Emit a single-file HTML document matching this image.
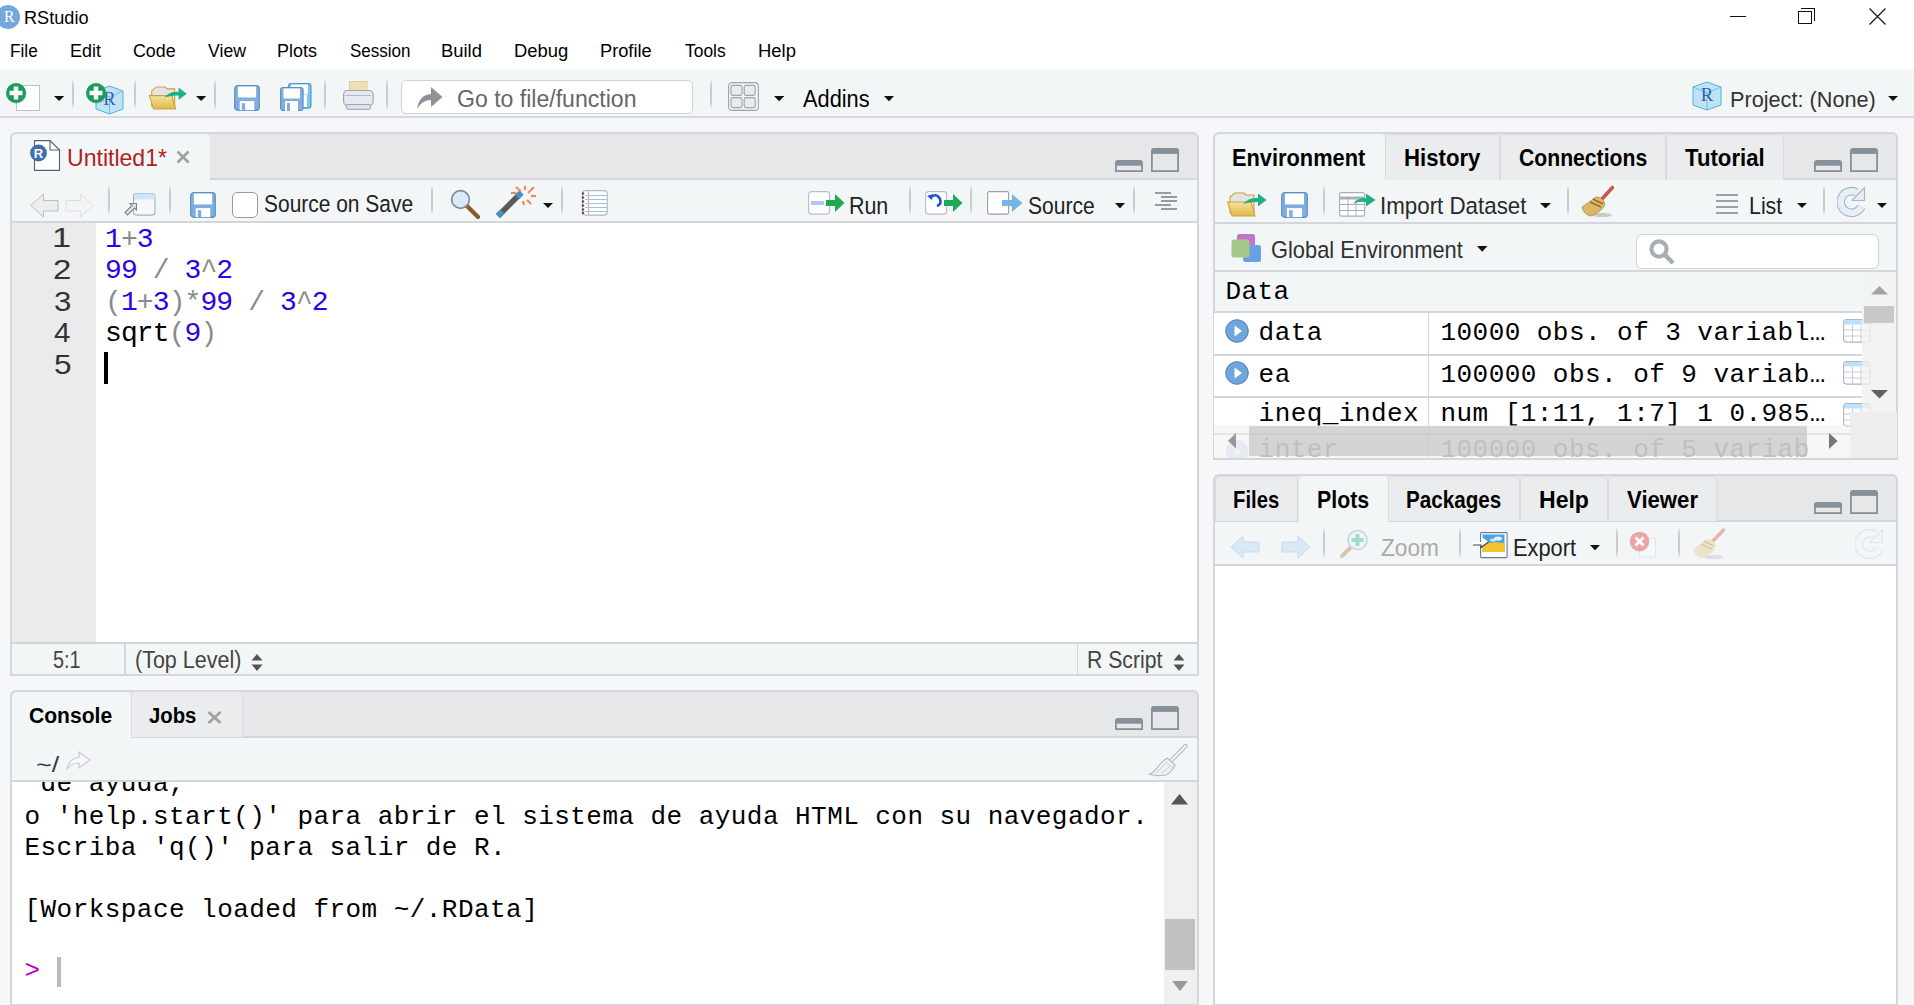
<!DOCTYPE html>
<html><head><meta charset="utf-8"><title>RStudio</title>
<style>
html,body{margin:0;padding:0;width:1914px;height:1005px;overflow:hidden;background:#f6f7f8;}
body{position:relative;font-family:"Liberation Sans", sans-serif;}
.t{position:absolute;white-space:pre;line-height:1;transform-origin:0 0;}
</style></head><body>
<div style="position:absolute;left:0px;top:0px;width:1914px;height:69px;background:#ffffff"></div>
<div style="position:absolute;left:-4px;top:5px;width:24px;height:24px;border-radius:50%;background:#75a7dc"></div>
<div style="position:absolute;left:1730px;top:16px;width:16px;height:1px;background:#111"></div>
<div style="position:absolute;left:1798px;top:11px;width:14px;height:13px;border:1px solid #111;box-sizing:border-box"></div>
<div style="position:absolute;left:1801px;top:8px;width:14px;height:13px;border-top:1px solid #111;border-right:1px solid #111;box-sizing:border-box"></div>
<svg style="position:absolute;left:1869px;top:8px;" width="17" height="17" viewBox="0 0 17 17"><path d="M0.5 0.5L16.5 16.5M16.5 0.5L0.5 16.5" stroke="#111" stroke-width="1.1"/></svg>
<div style="position:absolute;left:0px;top:69px;width:1914px;height:47px;background:#f3f6f7"></div>
<div style="position:absolute;left:0px;top:116px;width:1914px;height:2px;background:#d6d9dc"></div>
<div style="position:absolute;left:10px;top:132.3px;width:1189px;height:543.7px;background:#e6e7e9;border:2px solid #d3d7da;border-radius:6px 6px 0 0;box-sizing:border-box"></div>
<div style="position:absolute;left:11.7px;top:134px;width:198.3px;height:46px;background:#f3f6f7;border-radius:5px 5px 0 0"></div>
<div style="position:absolute;left:11.7px;top:178px;width:1185.6px;height:2px;background:#d3d7da"></div>
<div style="position:absolute;left:11.7px;top:180px;width:1185.6px;height:42px;background:#f3f6f7"></div>
<div style="position:absolute;left:11.7px;top:134px;width:198.3px;height:47px;background:#f3f6f7;border-radius:5px 5px 0 0"></div>
<div style="position:absolute;left:11.7px;top:221px;width:1185.6px;height:2px;background:#d3d7da"></div>
<div style="position:absolute;left:11.7px;top:223px;width:1185.6px;height:420px;background:#ffffff"></div>
<div style="position:absolute;left:11.7px;top:223px;width:84.3px;height:420px;background:#ebebeb"></div>
<div style="position:absolute;left:11.7px;top:642px;width:1185.6px;height:2px;background:#d3d7da"></div>
<div style="position:absolute;left:11.7px;top:644px;width:1185.6px;height:30.299999999999955px;background:#f3f6f7"></div>
<div style="position:absolute;left:124px;top:644px;width:1.5px;height:30.299999999999955px;background:#d3d7da"></div>
<div style="position:absolute;left:1076.5px;top:644px;width:1.5px;height:30.299999999999955px;background:#d3d7da"></div>
<div style="position:absolute;left:10px;top:690px;width:1189px;height:315px;background:#e6e7e9;border:2px solid #d3d7da;border-radius:6px 6px 0 0;box-sizing:border-box"></div>
<div style="position:absolute;left:11.7px;top:736px;width:1185.6px;height:2px;background:#d3d7da"></div>
<div style="position:absolute;left:131px;top:691px;width:112px;height:46px;background:#ebeced;border:1.5px solid #d9dcdf;border-bottom:none;border-radius:5px 5px 0 0;box-sizing:border-box"></div>
<div style="position:absolute;left:11.7px;top:691.7px;width:119.3px;height:46.299999999999955px;background:#f3f6f7;border-radius:5px 5px 0 0"></div>
<div style="position:absolute;left:11.7px;top:738px;width:1185.6px;height:42px;background:#f3f6f7"></div>
<div style="position:absolute;left:11.7px;top:780px;width:1185.6px;height:2px;background:#d3d7da"></div>
<div style="position:absolute;left:11.7px;top:782px;width:1185.6px;height:221.79999999999995px;background:#ffffff"></div>
<div style="position:absolute;left:1164px;top:782px;width:33.299999999999955px;height:221.79999999999995px;background:#f0f0f0"></div>
<div style="position:absolute;left:1165px;top:919px;width:30px;height:51px;background:#c1c1c1"></div>
<div style="position:absolute;left:1213px;top:132.3px;width:685px;height:327.7px;background:#e6e7e9;border:2px solid #d3d7da;border-radius:6px 6px 0 0;box-sizing:border-box"></div>
<div style="position:absolute;left:1215px;top:178px;width:681.3px;height:2px;background:#d3d7da"></div>
<div style="position:absolute;left:1385px;top:133.5px;width:115px;height:46.5px;background:#ebeced;border:1.5px solid #d9dcdf;border-bottom:none;border-radius:5px 5px 0 0;box-sizing:border-box"></div>
<div style="position:absolute;left:1500px;top:133.5px;width:166px;height:46.5px;background:#ebeced;border:1.5px solid #d9dcdf;border-bottom:none;border-radius:5px 5px 0 0;box-sizing:border-box"></div>
<div style="position:absolute;left:1666px;top:133.5px;width:118px;height:46.5px;background:#ebeced;border:1.5px solid #d9dcdf;border-bottom:none;border-radius:5px 5px 0 0;box-sizing:border-box"></div>
<div style="position:absolute;left:1214.7px;top:134px;width:170.29999999999995px;height:47px;background:#f3f6f7;border-radius:5px 5px 0 0"></div>
<div style="position:absolute;left:1214.7px;top:180px;width:681.5999999999999px;height:42px;background:#f3f6f7"></div>
<div style="position:absolute;left:1214.7px;top:222px;width:681.5999999999999px;height:2px;background:#d3d7da"></div>
<div style="position:absolute;left:1214.7px;top:224px;width:681.5999999999999px;height:46px;background:#f3f6f7"></div>
<div style="position:absolute;left:1214.7px;top:270px;width:681.5999999999999px;height:2px;background:#d3d7da"></div>
<div style="position:absolute;left:1214.7px;top:272px;width:681.5999999999999px;height:186px;background:#f3f6f7"></div>
<div style="position:absolute;left:1213px;top:474px;width:685px;height:531px;background:#e6e7e9;border:2px solid #d3d7da;border-radius:6px 6px 0 0;box-sizing:border-box"></div>
<div style="position:absolute;left:1215px;top:520px;width:681.3px;height:2px;background:#d3d7da"></div>
<div style="position:absolute;left:1214.7px;top:475.5px;width:83.79999999999995px;height:45.5px;background:#ebeced;border:1.5px solid #d9dcdf;border-bottom:none;border-radius:5px 5px 0 0;box-sizing:border-box"></div>
<div style="position:absolute;left:1387.5px;top:475.5px;width:132.5px;height:45.5px;background:#ebeced;border:1.5px solid #d9dcdf;border-bottom:none;border-radius:5px 5px 0 0;box-sizing:border-box"></div>
<div style="position:absolute;left:1520px;top:475.5px;width:87.5px;height:45.5px;background:#ebeced;border:1.5px solid #d9dcdf;border-bottom:none;border-radius:5px 5px 0 0;box-sizing:border-box"></div>
<div style="position:absolute;left:1607.5px;top:475.5px;width:109.5px;height:45.5px;background:#ebeced;border:1.5px solid #d9dcdf;border-bottom:none;border-radius:5px 5px 0 0;box-sizing:border-box"></div>
<div style="position:absolute;left:1298.5px;top:476px;width:89.0px;height:46px;background:#f3f6f7;border-radius:5px 5px 0 0"></div>
<div style="position:absolute;left:1214.7px;top:522px;width:681.5999999999999px;height:42px;background:#f3f6f7"></div>
<div style="position:absolute;left:1214.7px;top:564px;width:681.5999999999999px;height:2px;background:#d3d7da"></div>
<div style="position:absolute;left:1214.7px;top:566px;width:681.5999999999999px;height:437.79999999999995px;background:#ffffff"></div>
<div style="position:absolute;left:104px;top:352px;width:4px;height:32px;background:#000"></div>
<div style="position:absolute;left:57px;top:957px;width:4px;height:30px;background:#bbb"></div>
<svg style="position:absolute;left:16px;top:85px;" width="24" height="26" viewBox="0 0 24 26"><rect x="0.5" y="0.5" width="23" height="25" fill="#fff" stroke="#b9c3cf" stroke-width="1"/></svg>
<svg style="position:absolute;left:4.699999999999999px;top:81.6px;" width="23" height="23" viewBox="0 0 23 23"><circle cx="11.6" cy="11.6" r="10" fill="#6b7d6b" opacity="0.35"/><circle cx="11" cy="11" r="10" fill="#1a9d5c"/><path d="M8.8 4.5h4.4v4.3h4.3v4.4h-4.3v4.3h-4.4v-4.3h-4.3v-4.4h4.3z" fill="#fff"/></svg>
<svg style="position:absolute;left:54px;top:96px;" width="10.299999999999997" height="5" viewBox="0 0 10.299999999999997 5"><path d="M0 0H10.299999999999997L5.149999999999999 5Z" fill="#111"/></svg>
<div style="position:absolute;left:72px;top:79px;width:2px;height:30px;background:linear-gradient(to bottom,rgba(200,204,208,0),#c9cdd0 20%,#c9cdd0 80%,rgba(200,204,208,0))"></div>
<svg style="position:absolute;left:95px;top:85px;" width="29" height="30" viewBox="0 0 29 30"><path d="M14.5 1 L28 6.0 V24.0 L14.5 29 L1 24.0 V6.0Z" fill="#bfe3f5" stroke="#4fb3d9" stroke-width="1"/><path d="M1 6.0 L14.5 12.0 L28 6.0 M14.5 12.0 V29" fill="none" stroke="#4fb3d9" stroke-width="0.9" opacity="0.8"/><text x="14.5" y="20.400000000000002" text-anchor="middle" font-family="Liberation Serif" font-size="18.6" fill="#2f62b0">R</text></svg>
<svg style="position:absolute;left:84.6px;top:81.6px;" width="23" height="23" viewBox="0 0 23 23"><circle cx="11.6" cy="11.6" r="10" fill="#6b7d6b" opacity="0.35"/><circle cx="11" cy="11" r="10" fill="#1a9d5c"/><path d="M8.8 4.5h4.4v4.3h4.3v4.4h-4.3v4.3h-4.4v-4.3h-4.3v-4.4h4.3z" fill="#fff"/></svg>
<div style="position:absolute;left:134px;top:79px;width:2px;height:30px;background:linear-gradient(to bottom,rgba(200,204,208,0),#c9cdd0 20%,#c9cdd0 80%,rgba(200,204,208,0))"></div>
<svg style="position:absolute;left:148px;top:86px;" width="40" height="24" viewBox="0 0 40 25"><path d="M3 5 L8 1 H17 L19 3 H27 V21 H3Z" fill="#e4e4e4" stroke="#c9a33a" stroke-width="1.1"/><path d="M0.6 10 H24 L28 24 H5Z" fill="url(#fg)" stroke="#c9a33a" stroke-width="1.1"/><defs><linearGradient id="fg" x1="0" y1="0" x2="0" y2="1"><stop offset="0" stop-color="#f7e39a"/><stop offset="1" stop-color="#e0b84a"/></linearGradient></defs><path d="M16 12 Q22 5 31 6 V1.5 L39.5 8 L31 14.5 V10 Q24 9.5 16 12Z" fill="#21b083"/></svg>
<svg style="position:absolute;left:196px;top:96px;" width="10.300000000000011" height="5" viewBox="0 0 10.300000000000011 5"><path d="M0 0H10.300000000000011L5.150000000000006 5Z" fill="#111"/></svg>
<div style="position:absolute;left:214px;top:79px;width:2px;height:31px;background:linear-gradient(to bottom,rgba(200,204,208,0),#c9cdd0 20%,#c9cdd0 80%,rgba(200,204,208,0))"></div>
<svg style="position:absolute;left:234px;top:85px;" width="26" height="26" viewBox="0 0 26 26"><rect x="0.7" y="0.7" width="24.6" height="24.6" rx="3" fill="#7eaee0" stroke="#5b8fc7" stroke-width="1.2"/><rect x="3.9" y="1.5" width="18.2" height="10.92" fill="#fff"/><rect x="5.72" y="16.12" width="14.560000000000002" height="9.08" fill="#fff"/><rect x="7.8" y="18.2" width="3.38" height="7.0" fill="#7eaee0"/></svg>
<svg style="position:absolute;left:280px;top:83px;" width="32" height="28" viewBox="0 0 32 28"><rect x="8.5" y="0.6" width="22.5" height="24.5" rx="2.5" fill="#74c9ea" stroke="#5b8fc7" stroke-width="1.1"/><rect x="11" y="1.5" width="17" height="10" fill="#fff"/><rect x="22" y="12" width="5" height="12" fill="#fff"/><rect x="0.6" y="4.5" width="22.5" height="23" rx="2.5" fill="#7eaee0" stroke="#5b8fc7" stroke-width="1.1"/><rect x="3.5" y="5.5" width="16.5" height="10" fill="#fff"/><rect x="5" y="18" width="13" height="10" fill="#fff"/><rect x="7" y="20" width="3" height="8" fill="#7eaee0"/></svg>
<div style="position:absolute;left:324px;top:79px;width:2px;height:31px;background:linear-gradient(to bottom,rgba(200,204,208,0),#c9cdd0 20%,#c9cdd0 80%,rgba(200,204,208,0))"></div>
<svg style="position:absolute;left:343px;top:81px;" width="31" height="29" viewBox="0 0 31 29"><rect x="6.5" y="0.5" width="17.5" height="14" fill="#efe0b4" stroke="#e2cf98"/><rect x="0.6" y="9.5" width="29.5" height="15" rx="4" fill="#e6e9ef" stroke="#9aa3b0" stroke-width="1.1"/><rect x="3.5" y="23.5" width="24" height="4.8" rx="1.5" fill="#dfe3ea" stroke="#9aa3b0"/><line x1="2" y1="14.5" x2="28" y2="14.5" stroke="#b5bcc6"/></svg>
<div style="position:absolute;left:386px;top:79px;width:2px;height:31px;background:linear-gradient(to bottom,rgba(200,204,208,0),#c9cdd0 20%,#c9cdd0 80%,rgba(200,204,208,0))"></div>
<div style="position:absolute;left:401px;top:80px;width:292px;height:34px;background:#fff;border:1.5px solid #cfd3d6;border-radius:5px;box-sizing:border-box"></div>
<svg style="position:absolute;left:416px;top:86px;" width="27" height="24" viewBox="0 0 27 24"><path d="M1 23 Q3 9 15 8 V1 L26.5 11 L15 21 V14 Q6 14 1 23Z" fill="#8b9299"/></svg>
<div style="position:absolute;left:710px;top:79px;width:2px;height:30px;background:linear-gradient(to bottom,rgba(200,204,208,0),#c9cdd0 20%,#c9cdd0 80%,rgba(200,204,208,0))"></div>
<svg style="position:absolute;left:728px;top:82px;" width="31" height="29" viewBox="0 0 31 29"><rect x="0.6" y="0.6" width="29.8" height="27.8" rx="3.5" fill="#f2f4f5" stroke="#9ba3ab" stroke-width="1.1"/><rect x="3" y="3.4" width="11" height="10" rx="1.8" fill="#e8eaee" stroke="#9ba3ab" stroke-width="1.1"/><rect x="16.2" y="3.4" width="11" height="10" rx="1.8" fill="#e8eaee" stroke="#9ba3ab" stroke-width="1.1"/><rect x="3" y="15.6" width="11" height="10" rx="1.8" fill="#e8eaee" stroke="#9ba3ab" stroke-width="1.1"/><rect x="16.2" y="15.6" width="11" height="10" rx="1.8" fill="#e8eaee" stroke="#9ba3ab" stroke-width="1.1"/></svg>
<svg style="position:absolute;left:774px;top:96px;" width="10.299999999999955" height="5.299999999999997" viewBox="0 0 10.299999999999955 5.299999999999997"><path d="M0 0H10.299999999999955L5.149999999999977 5.299999999999997Z" fill="#111"/></svg>
<svg style="position:absolute;left:884px;top:96px;" width="10" height="5.299999999999997" viewBox="0 0 10 5.299999999999997"><path d="M0 0H10L5.0 5.299999999999997Z" fill="#111"/></svg>
<svg style="position:absolute;left:1692px;top:81px;" width="30" height="30" viewBox="0 0 30 30"><path d="M15.0 1 L29 6.0 V24.0 L15.0 29 L1 24.0 V6.0Z" fill="#bfe3f5" stroke="#4fb3d9" stroke-width="1"/><path d="M1 6.0 L15.0 12.0 L29 6.0 M15.0 12.0 V29" fill="none" stroke="#4fb3d9" stroke-width="0.9" opacity="0.8"/><text x="15.0" y="20.400000000000002" text-anchor="middle" font-family="Liberation Serif" font-size="18.6" fill="#2f62b0">R</text></svg>
<svg style="position:absolute;left:1888px;top:96px;" width="10" height="5" viewBox="0 0 10 5"><path d="M0 0H10L5.0 5Z" fill="#111"/></svg>
<svg style="position:absolute;left:30px;top:140px;" width="31" height="31" viewBox="0 0 31 31"><path d="M4.5 0.6H20L29.5 10V30.4H4.5Z" fill="#fff" stroke="#5a6068" stroke-width="1.1"/><path d="M20 0.6V10H29.5" fill="none" stroke="#5a6068" stroke-width="1.1"/><circle cx="8.5" cy="13" r="8.4" fill="#3f6ea8"/><text x="8.5" y="17.8" text-anchor="middle" font-family="Liberation Sans" font-weight="bold" font-size="13" fill="#fff">R</text></svg>
<svg style="position:absolute;left:176px;top:150px;" width="14" height="14" viewBox="0 0 14 14"><path d="M1.5 1.5L12.5 12.5M12.5 1.5L1.5 12.5" stroke="#a0a0a0" stroke-width="2.6"/></svg>
<svg style="position:absolute;left:1115px;top:160px;" width="28" height="12" viewBox="0 0 28 12"><path d="M0 12V3Q0 0 3 0H25Q28 0 28 3V12Z" fill="#86909a"/><rect x="1.8" y="5.7" width="24.4" height="4.5" fill="#e6e7e9"/></svg>
<svg style="position:absolute;left:1151px;top:148px;" width="28" height="24" viewBox="0 0 28 24"><path d="M0 24V3Q0 0 3 0H25Q28 0 28 3V24Z" fill="#86909a"/><rect x="1.8" y="5.9" width="24.4" height="16.3" fill="#e6e7e9"/></svg>
<svg style="position:absolute;left:30px;top:193px;" width="29" height="25" viewBox="0 0 29 25"><path d="M0.8 12.5 L13.5 1 V7.5 H28 V18 H13.5 V24 Z" fill="#ededee" stroke="#b9bcc0" stroke-width="1"/></svg>
<svg style="position:absolute;left:65px;top:193px;" width="29" height="25" viewBox="0 0 29 25"><path d="M28.2 12.5 L15.5 1 V7.5 H1 V18 H15.5 V24 Z" fill="#f3f4f5" stroke="#dcdee0" stroke-width="1"/></svg>
<div style="position:absolute;left:108px;top:185px;width:2px;height:30px;background:linear-gradient(to bottom,rgba(200,204,208,0),#c9cdd0 20%,#c9cdd0 80%,rgba(200,204,208,0))"></div>
<svg style="position:absolute;left:124px;top:193px;" width="32" height="23" viewBox="0 0 32 23"><rect x="9.5" y="0.6" width="21.5" height="21.5" rx="3" fill="#f6f8fa" stroke="#a9b1b9" stroke-width="1.1"/><path d="M10 3.5 Q10 0.6 13 0.6 H28 Q31 0.6 31 3.5 V6.5 H10Z" fill="#cfe6f8"/><path d="M1 19.5 L8 12.5 L6 10.5 H12.5 V17 L10.5 15 L3.5 22Z" fill="#dfe3e8" stroke="#7e8790" stroke-width="1.1"/></svg>
<div style="position:absolute;left:169px;top:185px;width:2px;height:30px;background:linear-gradient(to bottom,rgba(200,204,208,0),#c9cdd0 20%,#c9cdd0 80%,rgba(200,204,208,0))"></div>
<svg style="position:absolute;left:190px;top:192px;" width="26" height="26" viewBox="0 0 26 26"><rect x="0.7" y="0.7" width="24.6" height="24.6" rx="3" fill="#7eaee0" stroke="#5b8fc7" stroke-width="1.2"/><rect x="3.9" y="1.5" width="18.2" height="10.92" fill="#fff"/><rect x="5.72" y="16.12" width="14.560000000000002" height="9.08" fill="#fff"/><rect x="7.8" y="18.2" width="3.38" height="7.0" fill="#7eaee0"/></svg>
<div style="position:absolute;left:232px;top:192px;width:26px;height:26px;background:#fff;border:1.8px solid #9b9b9b;border-radius:5px;box-sizing:border-box"></div>
<div style="position:absolute;left:431px;top:185px;width:2px;height:30px;background:linear-gradient(to bottom,rgba(200,204,208,0),#c9cdd0 20%,#c9cdd0 80%,rgba(200,204,208,0))"></div>
<svg style="position:absolute;left:450px;top:189px;" width="30" height="30" viewBox="0 0 30 30"><line x1="16" y1="16" x2="28" y2="28" stroke="#8a5a2b" stroke-width="4.2" stroke-linecap="round"/><line x1="15" y1="15" x2="17" y2="17" stroke="#5bbbe8" stroke-width="4"/><circle cx="10.5" cy="10.5" r="8.8" fill="#dbeafb" stroke="#7e8a96" stroke-width="1.7"/></svg>
<svg style="position:absolute;left:496px;top:185px;" width="40" height="33" viewBox="0 0 40 33"><path d="M2 31 L25 8" stroke="#5a5a5a" stroke-width="5.8" stroke-linecap="butt"/><path d="M2 31 L6.5 26.5" stroke="#4a8fc2" stroke-width="6"/><path d="M21 12 L25.5 7.5" stroke="#4a8fc2" stroke-width="6"/><g stroke="#f08a5a" stroke-width="2.2"><path d="M20 2 L25 6.5"/><path d="M29 1 V5"/><path d="M38 2 L32 8"/><path d="M35 11 H40"/><path d="M31 15 L35 19"/><path d="M27 16 L28 20"/><path d="M15 8 H20"/></g></svg>
<svg style="position:absolute;left:543px;top:203px;" width="10" height="5" viewBox="0 0 10 5"><path d="M0 0H10L5.0 5Z" fill="#111"/></svg>
<div style="position:absolute;left:561px;top:185px;width:2px;height:30px;background:linear-gradient(to bottom,rgba(200,204,208,0),#c9cdd0 20%,#c9cdd0 80%,rgba(200,204,208,0))"></div>
<svg style="position:absolute;left:580px;top:190px;" width="28" height="26" viewBox="0 0 28 26"><rect x="2.5" y="0.6" width="24.8" height="24.5" rx="3" fill="#fff" stroke="#b4b8bd" stroke-width="1.1"/><g stroke="#9cc0e8" stroke-width="1"><path d="M5 5.5H27M5 9.5H27M5 13.5H27M5 17.5H27M5 21.5H27"/></g><path d="M8.5 1V25" stroke="#f0a0a0" stroke-width="1"/><g fill="#555"><circle cx="3" cy="3.5" r="1.3"/><circle cx="3" cy="7.5" r="1.3"/><circle cx="3" cy="11.5" r="1.3"/><circle cx="3" cy="15.5" r="1.3"/><circle cx="3" cy="19.5" r="1.3"/><circle cx="3" cy="23" r="1.3"/></g></svg>
<svg style="position:absolute;left:808px;top:191px;" width="37" height="24" viewBox="0 0 37 24"><rect x="0.6" y="0.6" width="21" height="22.5" rx="3" fill="#fff" stroke="#b9bec4" stroke-width="1.1"/><rect x="3" y="10" width="13" height="4" fill="#a9c8ef"/><path d="M18 9 H27 V3 L36.5 12 L27 21 V15 H18Z" fill="#1daa55"/></svg>
<div style="position:absolute;left:909px;top:185px;width:2px;height:30px;background:linear-gradient(to bottom,rgba(200,204,208,0),#c9cdd0 20%,#c9cdd0 80%,rgba(200,204,208,0))"></div>
<svg style="position:absolute;left:925px;top:191px;" width="38" height="24" viewBox="0 0 38 24"><rect x="0.6" y="0.6" width="21" height="22.5" rx="3" fill="#fff" stroke="#b9bec4" stroke-width="1.1"/><path d="M5 7 Q11 1 15 8 Q17 13 12 15" fill="none" stroke="#1a56d6" stroke-width="2.6"/><path d="M2 5 L8 3 L7 9Z" fill="#1a56d6"/><path d="M19 9 H28 V3 L37.5 12 L28 21 V15 H19Z" fill="#1daa55"/></svg>
<div style="position:absolute;left:970px;top:185px;width:2px;height:30px;background:linear-gradient(to bottom,rgba(200,204,208,0),#c9cdd0 20%,#c9cdd0 80%,rgba(200,204,208,0))"></div>
<svg style="position:absolute;left:987px;top:191px;" width="36" height="24" viewBox="0 0 36 24"><rect x="0.6" y="0.6" width="21" height="22.5" rx="1.5" fill="#fff" stroke="#9aa0a6" stroke-width="1.1"/><path d="M15 9 H25 V3 L35.5 12 L25 21 V15 H15Z" fill="#78b3e6"/></svg>
<svg style="position:absolute;left:1115px;top:202.6px;" width="10" height="5.400000000000006" viewBox="0 0 10 5.400000000000006"><path d="M0 0H10L5.0 5.400000000000006Z" fill="#111"/></svg>
<div style="position:absolute;left:1133px;top:185px;width:2px;height:30px;background:linear-gradient(to bottom,rgba(200,204,208,0),#c9cdd0 20%,#c9cdd0 80%,rgba(200,204,208,0))"></div>
<svg style="position:absolute;left:1155px;top:192px;" width="23" height="19" viewBox="0 0 23 19"><g stroke="#939ba4" stroke-width="1.9"><path d="M0 1H16M6 5H22M6 9H22M0 13H16M6 17H22"/></g></svg>
<svg style="position:absolute;left:251px;top:654px;" width="12" height="17" viewBox="0 0 12 17"><path d="M6 0L11.5 6.5H0.5Z M6 17L11.5 10.5H0.5Z" fill="#555"/></svg>
<svg style="position:absolute;left:1173px;top:654px;" width="12" height="17" viewBox="0 0 12 17"><path d="M6 0L11.5 6.5H0.5Z M6 17L11.5 10.5H0.5Z" fill="#555"/></svg>
<svg style="position:absolute;left:207px;top:711px;" width="15" height="13" viewBox="0 0 15 13"><path d="M1.5 1L13.5 12M13.5 1L1.5 12" stroke="#a0a0a0" stroke-width="2.6"/></svg>
<svg style="position:absolute;left:1115px;top:718px;" width="28" height="12" viewBox="0 0 28 12"><path d="M0 12V3Q0 0 3 0H25Q28 0 28 3V12Z" fill="#86909a"/><rect x="1.8" y="5.7" width="24.4" height="4.5" fill="#e6e7e9"/></svg>
<svg style="position:absolute;left:1151px;top:706px;" width="28" height="24" viewBox="0 0 28 24"><path d="M0 24V3Q0 0 3 0H25Q28 0 28 3V24Z" fill="#86909a"/><rect x="1.8" y="5.9" width="24.4" height="16.3" fill="#e6e7e9"/></svg>
<svg style="position:absolute;left:66px;top:751px;" width="25" height="19" viewBox="0 0 25 19"><path d="M1 18 Q3 7 13 6.5 V1 L24 9 L13 17 V12 Q6 12 1 18Z" fill="#f7f8fa" stroke="#c7ccd1" stroke-width="1.1"/></svg>
<svg style="position:absolute;left:1148px;top:744px;" width="40" height="33" viewBox="0 0 40 33"><path d="M37.5 2 L23 17" stroke="#b3bac1" stroke-width="4.2" stroke-linecap="round"/><path d="M37.5 2 L23 17" stroke="#f4f6f8" stroke-width="2" stroke-linecap="round"/><path d="M19 14 L27 21 Q24 28 18 31 Q10 32.5 1.5 30.5 Q6 28 9 24 Q14 17 19 14Z" fill="#eef1f4" stroke="#b3bac1" stroke-width="1.1"/><path d="M8 29 L18 19 M13 30 L22 22 M17 17 L25 24" stroke="#c3c9cf" stroke-width="0.9"/></svg>
<svg style="position:absolute;left:1171px;top:794px;" width="17" height="11" viewBox="0 0 17 11"><path d="M8.5 0L17 10.5H0Z" fill="#555"/></svg>
<svg style="position:absolute;left:1172px;top:981px;" width="16" height="10" viewBox="0 0 16 10"><path d="M8 10L16 0H0Z" fill="#999"/></svg>
<svg style="position:absolute;left:1814px;top:160px;" width="28" height="12" viewBox="0 0 28 12"><path d="M0 12V3Q0 0 3 0H25Q28 0 28 3V12Z" fill="#86909a"/><rect x="1.8" y="5.7" width="24.4" height="4.5" fill="#e6e7e9"/></svg>
<svg style="position:absolute;left:1850px;top:148px;" width="28" height="24" viewBox="0 0 28 24"><path d="M0 24V3Q0 0 3 0H25Q28 0 28 3V24Z" fill="#86909a"/><rect x="1.8" y="5.9" width="24.4" height="16.3" fill="#e6e7e9"/></svg>
<svg style="position:absolute;left:1227px;top:192px;" width="40" height="25" viewBox="0 0 40 25"><path d="M3 5 L8 1 H17 L19 3 H27 V21 H3Z" fill="#e4e4e4" stroke="#c9a33a" stroke-width="1.1"/><path d="M0.6 10 H24 L28 24 H5Z" fill="url(#fg)" stroke="#c9a33a" stroke-width="1.1"/><defs><linearGradient id="fg" x1="0" y1="0" x2="0" y2="1"><stop offset="0" stop-color="#f7e39a"/><stop offset="1" stop-color="#e0b84a"/></linearGradient></defs><path d="M16 12 Q22 5 31 6 V1.5 L39.5 8 L31 14.5 V10 Q24 9.5 16 12Z" fill="#21b083"/></svg>
<svg style="position:absolute;left:1281px;top:192px;" width="27" height="26" viewBox="0 0 27 26"><rect x="0.7" y="0.7" width="25.6" height="24.6" rx="3" fill="#7eaee0" stroke="#5b8fc7" stroke-width="1.2"/><rect x="4.05" y="1.5" width="18.9" height="10.92" fill="#fff"/><rect x="5.94" y="16.12" width="15.120000000000001" height="9.08" fill="#fff"/><rect x="8.1" y="18.2" width="3.5100000000000002" height="7.0" fill="#7eaee0"/></svg>
<div style="position:absolute;left:1323px;top:185px;width:2px;height:31px;background:linear-gradient(to bottom,rgba(200,204,208,0),#c9cdd0 20%,#c9cdd0 80%,rgba(200,204,208,0))"></div>
<svg style="position:absolute;left:1339px;top:192px;" width="37" height="25" viewBox="0 0 37 25"><rect x="0.6" y="0.6" width="25" height="23.5" rx="2" fill="#fff" stroke="#a7b0ba" stroke-width="1.1"/><path d="M1 6H25" stroke="#a7b0ba" stroke-width="3"/><g stroke="#a7b0ba" stroke-width="1"><path d="M1 12.5H25M1 18.5H25M9 6V24M17 6V24"/></g><path d="M14 12 Q19 5 27 6 V1.5 L36.5 8 L27 14.5 V10 Q20 9 14 12Z" fill="#21b083"/></svg>
<svg style="position:absolute;left:1540px;top:203px;" width="11" height="5.400000000000006" viewBox="0 0 11 5.400000000000006"><path d="M0 0H11L5.5 5.400000000000006Z" fill="#111"/></svg>
<div style="position:absolute;left:1567px;top:185px;width:2px;height:31px;background:linear-gradient(to bottom,rgba(200,204,208,0),#c9cdd0 20%,#c9cdd0 80%,rgba(200,204,208,0))"></div>
<svg style="position:absolute;left:1581px;top:185px;" width="33" height="33" viewBox="0 0 33 33"><ellipse cx="21" cy="30" rx="10" ry="2" fill="#777" opacity="0.35"/><path d="M31.5 2.5 L20 15" stroke="#c9574e" stroke-width="3.6" stroke-linecap="round"/><path d="M15 12 Q22 12 24 19 Q22 26 10 31 Q3 30 1 22 Q7 18 15 12Z" fill="#d9b86a" stroke="#b08a3a" stroke-width="0.8"/><path d="M9 17 L20 22 M12 14 L22 19" stroke="#9a6a2a" stroke-width="1.4"/></svg>
<svg style="position:absolute;left:1716px;top:194px;" width="23" height="20" viewBox="0 0 23 20"><g stroke="#9aa1a8" stroke-width="2"><path d="M0 1H22M0 7H22M0 13H22M0 19H22"/></g></svg>
<svg style="position:absolute;left:1797px;top:203px;" width="10" height="5" viewBox="0 0 10 5"><path d="M0 0H10L5.0 5Z" fill="#111"/></svg>
<div style="position:absolute;left:1823px;top:185px;width:2px;height:31px;background:linear-gradient(to bottom,rgba(200,204,208,0),#c9cdd0 20%,#c9cdd0 80%,rgba(200,204,208,0))"></div>
<svg style="position:absolute;left:1837px;top:186px;" width="30" height="31" viewBox="0 0 30 31"><g opacity="1"><path d="M24.29 20.56 A10.8 10.8 0 1 1 19.57 6.46" fill="none" stroke="#aab6c2" stroke-width="8.6"/><path d="M24.29 20.56 A10.8 10.8 0 1 1 19.57 6.46" fill="none" stroke="#e6eef8" stroke-width="6.4"/><path d="M27.5 1.5 V14.5 H15Z" fill="#e6eef8" stroke="#aab6c2" stroke-width="1.1" stroke-linejoin="round"/></g></svg>
<svg style="position:absolute;left:1877px;top:203px;" width="10" height="5" viewBox="0 0 10 5"><path d="M0 0H10L5.0 5Z" fill="#111"/></svg>
<svg style="position:absolute;left:1231px;top:233px;" width="31" height="30" viewBox="0 0 31 30"><rect x="6" y="1" width="18" height="17" rx="2.5" fill="#c174c9"/><rect x="12" y="12" width="18" height="17" rx="2.5" fill="#6aa0e8"/><rect x="0.5" y="6.5" width="18" height="18" rx="2.5" fill="#a7c78a"/></svg>
<svg style="position:absolute;left:1477px;top:246.4px;" width="10.400000000000091" height="5.799999999999983" viewBox="0 0 10.400000000000091 5.799999999999983"><path d="M0 0H10.400000000000091L5.2000000000000455 5.799999999999983Z" fill="#111"/></svg>
<div style="position:absolute;left:1636px;top:234px;width:243px;height:35px;background:#fff;border:1.5px solid #cfd3d6;border-radius:6px;box-sizing:border-box"></div>
<svg style="position:absolute;left:1649px;top:239px;" width="27" height="26" viewBox="0 0 27 26"><circle cx="10" cy="10" r="7.6" fill="none" stroke="#a7aeb4" stroke-width="4.2"/><path d="M15.5 15.5 L24 24" stroke="#a7aeb4" stroke-width="4.5"/></svg>
<div style="position:absolute;left:1214.7px;top:272px;width:681.5999999999999px;height:40px;background:#f3f6f7"></div>
<div style="position:absolute;left:1214px;top:311px;width:648px;height:2px;background:#d3d7da"></div>
<div style="position:absolute;left:1214px;top:313px;width:648px;height:41px;background:#fff"></div>
<div style="position:absolute;left:1214px;top:355px;width:648px;height:41px;background:#fff"></div>
<div style="position:absolute;left:1214px;top:397px;width:648px;height:36px;background:#fff"></div>
<div style="position:absolute;left:1214px;top:434px;width:648px;height:24px;background:#fff"></div>
<div style="position:absolute;left:1214px;top:354px;width:648px;height:1.5px;background:#d3d7da"></div>
<div style="position:absolute;left:1214px;top:396px;width:648px;height:1.5px;background:#d3d7da"></div>
<div style="position:absolute;left:1214px;top:433px;width:648px;height:1.5px;background:#d3d7da"></div>
<div style="position:absolute;left:1427.5px;top:313px;width:1.5px;height:145px;background:#d3d7da"></div>
<svg style="position:absolute;left:1225px;top:319px;" width="24" height="24" viewBox="0 0 24 24"><g opacity="1"><circle cx="12" cy="12" r="11.3" fill="#6fa6dc" stroke="#4a84c2" stroke-width="1"/><path d="M9.5 6.5 L17 12 L9.5 17.5Z" fill="#fff"/></g></svg>
<svg style="position:absolute;left:1225px;top:361px;" width="24" height="24" viewBox="0 0 24 24"><g opacity="1"><circle cx="12" cy="12" r="11.3" fill="#6fa6dc" stroke="#4a84c2" stroke-width="1"/><path d="M9.5 6.5 L17 12 L9.5 17.5Z" fill="#fff"/></g></svg>
<svg style="position:absolute;left:1214px;top:434px;" width="60" height="24" viewBox="0 0 60 24"><circle cx="23" cy="17.4" r="11.3" fill="#6fa6dc" opacity="0.3"/><path d="M20.5 11.9 L28 17.4 L20.5 22.9Z" fill="#fff" opacity="0.6"/></svg>
<svg style="position:absolute;left:1843px;top:319px;" width="28" height="24" viewBox="0 0 28 24"><g opacity="1"><rect x="0.6" y="0.6" width="26.5" height="22.5" rx="3" fill="#fff" stroke="#a9b6c4" stroke-width="1.1"/><path d="M1 3.5 Q1 1 3.5 1 H24 Q27 1 27 3.5 V5.5 H1Z" fill="#bfe0f7"/><g stroke="#c5ced8" stroke-width="1"><path d="M1 11H27M1 17H27M9.5 6V23M18 6V23"/></g></g></svg>
<svg style="position:absolute;left:1843px;top:361px;" width="28" height="24" viewBox="0 0 28 24"><g opacity="1"><rect x="0.6" y="0.6" width="26.5" height="22.5" rx="3" fill="#fff" stroke="#a9b6c4" stroke-width="1.1"/><path d="M1 3.5 Q1 1 3.5 1 H24 Q27 1 27 3.5 V5.5 H1Z" fill="#bfe0f7"/><g stroke="#c5ced8" stroke-width="1"><path d="M1 11H27M1 17H27M9.5 6V23M18 6V23"/></g></g></svg>
<svg style="position:absolute;left:1843px;top:403px;" width="28" height="24" viewBox="0 0 28 24"><g opacity="1"><rect x="0.6" y="0.6" width="26.5" height="22.5" rx="3" fill="#fff" stroke="#a9b6c4" stroke-width="1.1"/><path d="M1 3.5 Q1 1 3.5 1 H24 Q27 1 27 3.5 V5.5 H1Z" fill="#bfe0f7"/><g stroke="#c5ced8" stroke-width="1"><path d="M1 11H27M1 17H27M9.5 6V23M18 6V23"/></g></g></svg>
<svg style="position:absolute;left:1814px;top:502px;" width="28" height="12" viewBox="0 0 28 12"><path d="M0 12V3Q0 0 3 0H25Q28 0 28 3V12Z" fill="#86909a"/><rect x="1.8" y="5.7" width="24.4" height="4.5" fill="#e6e7e9"/></svg>
<svg style="position:absolute;left:1850px;top:490px;" width="28" height="24" viewBox="0 0 28 24"><path d="M0 24V3Q0 0 3 0H25Q28 0 28 3V24Z" fill="#86909a"/><rect x="1.8" y="5.9" width="24.4" height="16.3" fill="#e6e7e9"/></svg>
<svg style="position:absolute;left:1230px;top:535px;" width="30" height="24" viewBox="0 0 30 24"><path d="M1 12 L13 1 V7 H29 V17 H13 V23Z" fill="#d9e9f6" stroke="#c5dcee" stroke-width="1"/></svg>
<svg style="position:absolute;left:1281px;top:535px;" width="30" height="24" viewBox="0 0 30 24"><path d="M29 12 L17 1 V7 H1 V17 H17 V23Z" fill="#d9e9f6" stroke="#c5dcee" stroke-width="1"/></svg>
<div style="position:absolute;left:1323px;top:527px;width:2px;height:31px;background:linear-gradient(to bottom,rgba(200,204,208,0),#c9cdd0 20%,#c9cdd0 80%,rgba(200,204,208,0))"></div>
<svg style="position:absolute;left:1340px;top:529px;" width="29" height="29" viewBox="0 0 29 29"><line x1="2" y1="27" x2="10" y2="19" stroke="#d9c6ad" stroke-width="4" stroke-linecap="round"/><circle cx="17.5" cy="11" r="9.5" fill="#eef3f6" stroke="#c9d3da" stroke-width="1.6"/><path d="M15.5 5H19.5V9H23.5V13H19.5V17H15.5V13H11.5V9H15.5Z" fill="#9fdccf"/></svg>
<div style="position:absolute;left:1459px;top:527px;width:2px;height:31px;background:linear-gradient(to bottom,rgba(200,204,208,0),#c9cdd0 20%,#c9cdd0 80%,rgba(200,204,208,0))"></div>
<svg style="position:absolute;left:1472px;top:532px;" width="36" height="27" viewBox="0 0 36 27"><rect x="8.6" y="0.6" width="26.5" height="25" rx="1" fill="#fff" stroke="#6f7a86" stroke-width="1.1"/><rect x="10.5" y="2.5" width="22" height="17.5" fill="#4aa3e6"/><path d="M10.5 12 Q20 9 32.5 11 V20 H10.5Z" fill="#f2c230"/><ellipse cx="26" cy="6.5" rx="4" ry="2" fill="#fff" opacity="0.85"/><ellipse cx="21" cy="8" rx="3" ry="1.5" fill="#fff" opacity="0.7"/><path d="M1 10 H9 V4.5 L16.5 10 L9 15.5 V13 H1Z" fill="#fff"/><path d="M1 13 H9 V15.5 L16.5 10" fill="none" stroke="#444" stroke-width="1.2"/></svg>
<svg style="position:absolute;left:1590px;top:544.6px;" width="10" height="5.399999999999977" viewBox="0 0 10 5.399999999999977"><path d="M0 0H10L5.0 5.399999999999977Z" fill="#111"/></svg>
<div style="position:absolute;left:1616px;top:527px;width:2px;height:31px;background:linear-gradient(to bottom,rgba(200,204,208,0),#c9cdd0 20%,#c9cdd0 80%,rgba(200,204,208,0))"></div>
<svg style="position:absolute;left:1629px;top:531px;" width="28" height="27" viewBox="0 0 28 27"><rect x="10.5" y="7.5" width="16" height="18.5" fill="#f5f8fa" stroke="#e3e7ea" stroke-width="1"/><circle cx="10.5" cy="10.5" r="9.8" fill="#e8a6a6"/><path d="M6.5 6.5L14.5 14.5M14.5 6.5L6.5 14.5" stroke="#fff" stroke-width="2.8"/></svg>
<div style="position:absolute;left:1678px;top:527px;width:2px;height:31px;background:linear-gradient(to bottom,rgba(200,204,208,0),#c9cdd0 20%,#c9cdd0 80%,rgba(200,204,208,0))"></div>
<svg style="position:absolute;left:1693px;top:528px;" width="32" height="32" viewBox="0 0 32 32"><ellipse cx="20" cy="29" rx="10" ry="2" fill="#999" opacity="0.25"/><path d="M30.5 2 L19 14" stroke="#e9b4a8" stroke-width="3.4" stroke-linecap="round"/><path d="M14 11 Q21 11 23 18 Q21 25 9 30 Q2 29 0.5 21 Q6 17 14 11Z" fill="#ede3c8"/><path d="M8 16 L19 21 M11 13 L21 18" stroke="#d8bfa0" stroke-width="1.3"/></svg>
<svg style="position:absolute;left:1855px;top:528px;" width="30" height="31" viewBox="0 0 30 31"><g opacity="1"><path d="M24.29 20.56 A10.8 10.8 0 1 1 19.57 6.46" fill="none" stroke="#dfe5ea" stroke-width="8.6"/><path d="M24.29 20.56 A10.8 10.8 0 1 1 19.57 6.46" fill="none" stroke="#f3f6f9" stroke-width="6.4"/><path d="M27.5 1.5 V14.5 H15Z" fill="#f3f6f9" stroke="#dfe5ea" stroke-width="1.1" stroke-linejoin="round"/></g></svg>
<div class="t" style="left:3.53px;top:9.27px;font-size:15.86px;font-family:'Liberation Serif', serif;color:#ffffff;transform:scaleX(0.9929);">R</div>
<div class="t" style="left:24.25px;top:8.60px;font-size:18.90px;font-family:'Liberation Sans', sans-serif;color:#000;transform:scaleX(0.9599);">RStudio</div>
<div class="t" style="left:9.92px;top:42.42px;font-size:18.75px;font-family:'Liberation Sans', sans-serif;color:#000;transform:scaleX(0.9199);">File</div>
<div class="t" style="left:70.17px;top:42.42px;font-size:18.75px;font-family:'Liberation Sans', sans-serif;color:#000;transform:scaleX(0.9558);">Edit</div>
<div class="t" style="left:133.41px;top:42.42px;font-size:18.75px;font-family:'Liberation Sans', sans-serif;color:#000;transform:scaleX(0.9507);">Code</div>
<div class="t" style="left:208.01px;top:42.42px;font-size:18.75px;font-family:'Liberation Sans', sans-serif;color:#000;transform:scaleX(0.9423);">View</div>
<div class="t" style="left:277.36px;top:42.42px;font-size:18.75px;font-family:'Liberation Sans', sans-serif;color:#000;transform:scaleX(0.9580);">Plots</div>
<div class="t" style="left:349.53px;top:42.42px;font-size:18.75px;font-family:'Liberation Sans', sans-serif;color:#000;transform:scaleX(0.9074);">Session</div>
<div class="t" style="left:441.13px;top:42.42px;font-size:18.75px;font-family:'Liberation Sans', sans-serif;color:#000;transform:scaleX(0.9823);">Build</div>
<div class="t" style="left:513.73px;top:42.42px;font-size:18.75px;font-family:'Liberation Sans', sans-serif;color:#000;transform:scaleX(0.9830);">Debug</div>
<div class="t" style="left:599.94px;top:42.42px;font-size:18.75px;font-family:'Liberation Sans', sans-serif;color:#000;transform:scaleX(0.9724);">Profile</div>
<div class="t" style="left:684.95px;top:42.42px;font-size:18.75px;font-family:'Liberation Sans', sans-serif;color:#000;transform:scaleX(0.9287);">Tools</div>
<div class="t" style="left:758.02px;top:42.42px;font-size:18.75px;font-family:'Liberation Sans', sans-serif;color:#000;transform:scaleX(0.9840);">Help</div>
<div class="t" style="left:457.35px;top:87.19px;font-size:23.98px;font-family:'Liberation Sans', sans-serif;color:#666;transform:scaleX(0.9622);">Go to file/function</div>
<div class="t" style="left:803.10px;top:87.19px;font-size:23.98px;font-family:'Liberation Sans', sans-serif;color:#000;transform:scaleX(0.9084);">Addins</div>
<div class="t" style="left:1730.26px;top:88.10px;font-size:22.67px;font-family:'Liberation Sans', sans-serif;color:#333;transform:scaleX(0.9571);">Project: (None)</div>
<div class="t" style="left:66.87px;top:146.74px;font-size:23.69px;font-family:'Liberation Sans', sans-serif;color:#b22222;transform:scaleX(0.9734);">Untitled1*</div>
<div class="t" style="left:263.76px;top:192.66px;font-size:23.55px;font-family:'Liberation Sans', sans-serif;color:#222;transform:scaleX(0.8899);">Source on Save</div>
<div class="t" style="left:848.69px;top:194.38px;font-size:24.71px;font-family:'Liberation Sans', sans-serif;color:#222;transform:scaleX(0.8667);">Run</div>
<div class="t" style="left:1028.25px;top:194.38px;font-size:24.71px;font-family:'Liberation Sans', sans-serif;color:#222;transform:scaleX(0.8515);">Source</div>
<div class="t" style="left:52.71px;top:649.36px;font-size:23.55px;font-family:'Liberation Sans', sans-serif;color:#444;transform:scaleX(0.8429);">5:1</div>
<div class="t" style="left:134.71px;top:649.36px;font-size:23.55px;font-family:'Liberation Sans', sans-serif;color:#444;transform:scaleX(0.9128);">(Top Level)</div>
<div class="t" style="left:1086.81px;top:649.36px;font-size:23.55px;font-family:'Liberation Sans', sans-serif;color:#444;transform:scaleX(0.8996);">R Script</div>
<div class="t" style="left:29.26px;top:706.31px;font-size:21.37px;font-family:'Liberation Sans', sans-serif;font-weight:bold;color:#000;transform:scaleX(0.9868);">Console</div>
<div class="t" style="left:149.40px;top:706.31px;font-size:21.37px;font-family:'Liberation Sans', sans-serif;font-weight:bold;color:#000;transform:scaleX(0.9504);">Jobs</div>
<div class="t" style="left:36.09px;top:753.82px;font-size:22.53px;font-family:'Liberation Sans', sans-serif;color:#2f3a44;transform:scaleX(1.1909);">~/</div>
<div class="t" style="left:1232.48px;top:147.11px;font-size:23.26px;font-family:'Liberation Sans', sans-serif;font-weight:bold;color:#000;transform:scaleX(0.9377);">Environment</div>
<div class="t" style="left:1403.56px;top:147.11px;font-size:23.26px;font-family:'Liberation Sans', sans-serif;font-weight:bold;color:#000;transform:scaleX(0.9543);">History</div>
<div class="t" style="left:1518.85px;top:147.11px;font-size:23.26px;font-family:'Liberation Sans', sans-serif;font-weight:bold;color:#000;transform:scaleX(0.9104);">Connections</div>
<div class="t" style="left:1685.48px;top:147.11px;font-size:23.26px;font-family:'Liberation Sans', sans-serif;font-weight:bold;color:#000;transform:scaleX(0.9542);">Tutorial</div>
<div class="t" style="left:1379.99px;top:195.01px;font-size:23.26px;font-family:'Liberation Sans', sans-serif;color:#2a2a2a;transform:scaleX(0.9605);">Import Dataset</div>
<div class="t" style="left:1749.39px;top:195.01px;font-size:23.26px;font-family:'Liberation Sans', sans-serif;color:#222;transform:scaleX(0.9185);">List</div>
<div class="t" style="left:1270.71px;top:239.21px;font-size:23.26px;font-family:'Liberation Sans', sans-serif;color:#303030;transform:scaleX(0.9393);">Global Environment</div>
<div class="t" style="left:1232.58px;top:489.01px;font-size:23.26px;font-family:'Liberation Sans', sans-serif;font-weight:bold;color:#000;transform:scaleX(0.8719);">Files</div>
<div class="t" style="left:1316.71px;top:489.01px;font-size:23.26px;font-family:'Liberation Sans', sans-serif;font-weight:bold;color:#000;transform:scaleX(0.9170);">Plots</div>
<div class="t" style="left:1406.46px;top:489.01px;font-size:23.26px;font-family:'Liberation Sans', sans-serif;font-weight:bold;color:#000;transform:scaleX(0.8876);">Packages</div>
<div class="t" style="left:1538.90px;top:489.01px;font-size:23.26px;font-family:'Liberation Sans', sans-serif;font-weight:bold;color:#000;transform:scaleX(0.9915);">Help</div>
<div class="t" style="left:1627.19px;top:489.01px;font-size:23.26px;font-family:'Liberation Sans', sans-serif;font-weight:bold;color:#000;transform:scaleX(0.9532);">Viewer</div>
<div class="t" style="left:1381.32px;top:536.91px;font-size:23.26px;font-family:'Liberation Sans', sans-serif;color:#aaa;transform:scaleX(0.9751);">Zoom</div>
<div class="t" style="left:1512.75px;top:536.91px;font-size:23.26px;font-family:'Liberation Sans', sans-serif;color:#222;transform:scaleX(0.9383);">Export</div>
<div class="t" style="left:105.00px;top:225.55px;font-size:28.00px;font-family:'Liberation Mono', monospace;letter-spacing:-0.900px;color:#000;"><span style="color:#2f00e8">1</span><span style="color:#8a8a8a">+</span><span style="color:#2f00e8">3</span></div>
<div class="t" style="left:105.00px;top:257.05px;font-size:28.00px;font-family:'Liberation Mono', monospace;letter-spacing:-0.900px;color:#000;"><span style="color:#2f00e8">99</span><span style="color:#8a8a8a"> / </span><span style="color:#2f00e8">3</span><span style="color:#8a8a8a">^</span><span style="color:#2f00e8">2</span></div>
<div class="t" style="left:105.00px;top:288.75px;font-size:28.00px;font-family:'Liberation Mono', monospace;letter-spacing:-0.900px;color:#000;"><span style="color:#8a8a8a">(</span><span style="color:#2f00e8">1</span><span style="color:#8a8a8a">+</span><span style="color:#2f00e8">3</span><span style="color:#8a8a8a">)*</span><span style="color:#2f00e8">99</span><span style="color:#8a8a8a"> / </span><span style="color:#2f00e8">3</span><span style="color:#8a8a8a">^</span><span style="color:#2f00e8">2</span></div>
<div class="t" style="left:105.00px;top:320.35px;font-size:28.00px;font-family:'Liberation Mono', monospace;letter-spacing:-0.900px;color:#000;">sqrt<span style="color:#8a8a8a">(</span><span style="color:#2f00e8">9</span><span style="color:#8a8a8a">)</span></div>
<div class="t" style="left:52.41px;top:224.32px;font-size:27.62px;font-family:'Liberation Sans', sans-serif;color:#333;transform:scaleX(1.2486);">1</div>
<div class="t" style="left:53.35px;top:255.82px;font-size:27.62px;font-family:'Liberation Sans', sans-serif;color:#333;transform:scaleX(1.1938);">2</div>
<div class="t" style="left:53.91px;top:287.52px;font-size:27.62px;font-family:'Liberation Sans', sans-serif;color:#333;transform:scaleX(1.1316);">3</div>
<div class="t" style="left:54.41px;top:319.12px;font-size:27.62px;font-family:'Liberation Sans', sans-serif;color:#333;transform:scaleX(1.0650);">4</div>
<div class="t" style="left:53.74px;top:350.72px;font-size:27.62px;font-family:'Liberation Sans', sans-serif;color:#333;transform:scaleX(1.1435);">5</div>
<div class="t" style="left:24.50px;top:771.08px;font-size:26.00px;font-family:'Liberation Mono', monospace;letter-spacing:0.450px;color:#000;clip-path:inset(11px 0 0 0)"> de ayuda,</div>
<div class="t" style="left:24.50px;top:803.78px;font-size:26.00px;font-family:'Liberation Mono', monospace;letter-spacing:0.450px;color:#000;">o 'help.start()' para abrir el sistema de ayuda HTML con su navegador.</div>
<div class="t" style="left:24.50px;top:835.28px;font-size:26.00px;font-family:'Liberation Mono', monospace;letter-spacing:0.450px;color:#000;">Escriba 'q()' para salir de R.</div>
<div class="t" style="left:24.50px;top:896.58px;font-size:26.00px;font-family:'Liberation Mono', monospace;letter-spacing:0.450px;color:#000;">[Workspace loaded from ~/.RData]</div>
<div class="t" style="left:24.50px;top:958.38px;font-size:26.00px;font-family:'Liberation Mono', monospace;letter-spacing:0.450px;color:#c000c0;">></div>
<div class="t" style="left:1225.40px;top:278.98px;font-size:26.00px;font-family:'Liberation Mono', monospace;letter-spacing:0.450px;color:#000;">Data</div>
<div class="t" style="left:1258.60px;top:320.18px;font-size:26.00px;font-family:'Liberation Mono', monospace;letter-spacing:0.450px;color:#000;">data</div>
<div class="t" style="left:1258.60px;top:362.18px;font-size:26.00px;font-family:'Liberation Mono', monospace;letter-spacing:0.450px;color:#000;">ea</div>
<div class="t" style="left:1258.60px;top:401.48px;font-size:26.00px;font-family:'Liberation Mono', monospace;letter-spacing:0.450px;color:#000;">ineq_index</div>
<div class="t" style="left:1258.60px;top:437.08px;font-size:26.00px;font-family:'Liberation Mono', monospace;letter-spacing:0.450px;color:#858585;clip-path:inset(0 0 5px 0)">inter</div>
<div class="t" style="left:1440.50px;top:320.18px;font-size:26.00px;font-family:'Liberation Mono', monospace;letter-spacing:0.450px;color:#000;">10000 obs. of 3 variabl…</div>
<div class="t" style="left:1440.50px;top:362.18px;font-size:26.00px;font-family:'Liberation Mono', monospace;letter-spacing:0.450px;color:#000;">100000 obs. of 9 variab…</div>
<div class="t" style="left:1440.50px;top:401.48px;font-size:26.00px;font-family:'Liberation Mono', monospace;letter-spacing:0.450px;color:#000;">num [1:11, 1:7] 1 0.985…</div>
<div class="t" style="left:1440.50px;top:437.08px;font-size:26.00px;font-family:'Liberation Mono', monospace;letter-spacing:0.450px;color:#858585;clip-path:inset(0 0 5px 0)">100000 obs. of 5 variab</div>
<div style="position:absolute;left:1862px;top:272px;width:34.3px;height:186px;background:rgba(241,241,241,0.75)"></div>
<svg style="position:absolute;left:1871px;top:286px" width="17" height="9"><path d="M8.5 0L17 8.5H0Z" fill="#a3a3a3"/></svg>
<div style="position:absolute;left:1864px;top:306px;width:30px;height:16.5px;background:#c8c8c8"></div>
<svg style="position:absolute;left:1871px;top:390px" width="17" height="9"><path d="M8.5 8.5L17 0H0Z" fill="#606060"/></svg>
<div style="position:absolute;left:1214px;top:424.5px;width:636px;height:33.5px;background:rgba(240,240,240,0.55)"></div>
<div style="position:absolute;left:1249px;top:426.3px;width:557.5px;height:29.5px;background:rgba(190,190,190,0.62)"></div>
<svg style="position:absolute;left:1228px;top:433px" width="8" height="16"><path d="M8 0V15.5L0 7.75Z" fill="#8f8f8f" opacity="0.9"/></svg>
<svg style="position:absolute;left:1829px;top:433px" width="9" height="16"><path d="M0 0V16L8.6 8Z" fill="#777"/></svg>
<div style="position:absolute;left:1850px;top:412.4px;width:47px;height:46px;background:#eeeeee"></div>
</body></html>
